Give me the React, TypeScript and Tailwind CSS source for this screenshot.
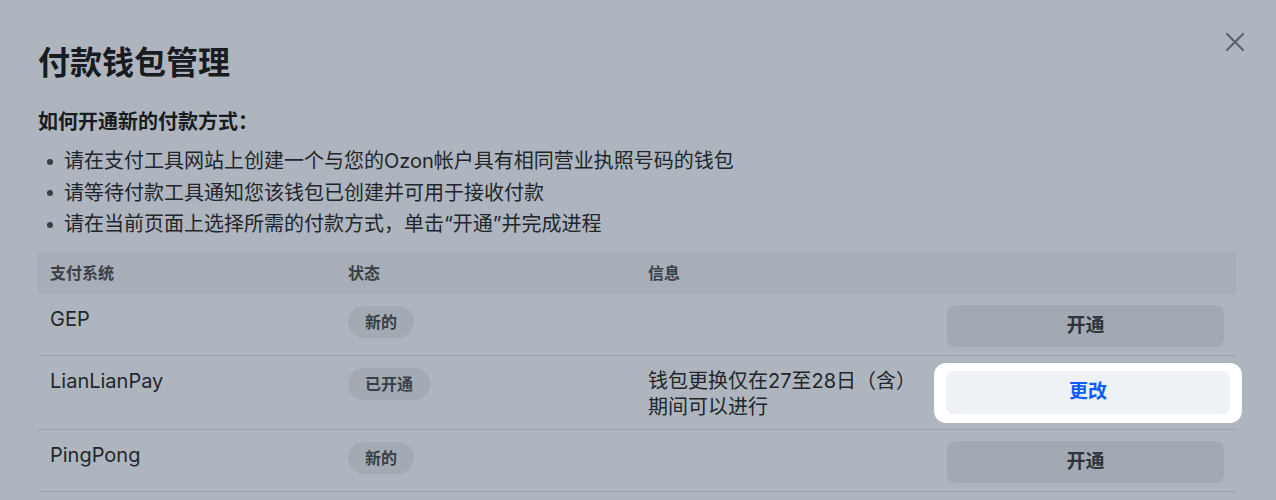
import { X } from "lucide-react";

type Wallet = {
  name: string;
  status: string;
  info?: string[];
  action: string;
  focused?: boolean;
};

const wallets: Wallet[] = [
  { name: "GEP", status: "新的", action: "开通" },
  {
    name: "LianLianPay",
    status: "已开通",
    info: ["钱包更换仅在27至28日（含）", "期间可以进行"],
    action: "更改",
    focused: true,
  },
  { name: "PingPong", status: "新的", action: "开通" },
];

const steps = [
  "请在支付工具网站上创建一个与您的Ozon帐户具有相同营业执照号码的钱包",
  "请等待付款工具通知您该钱包已创建并可用于接收付款",
  "请在当前页面上选择所需的付款方式，单击“开通”并完成进程",
];

const font = { fontFamily: "Inter, 'Noto Sans CJK SC', sans-serif" };

const App = function () {
  return (
    <div
      className="relative w-[1276px] h-[500px] overflow-hidden bg-[#aeb5be] text-[#22262c]"
      style={font}
    >
      <button className="absolute top-[26px] right-[25px] text-[#5c626a]">
        <X size={32} strokeWidth={1.6} />
      </button>
      <div className="pl-[38px] pr-[40px] pt-[43px]">
        <h1 className="text-[32px] leading-[40px] font-bold text-[#181b20]">
          付款钱包管理
        </h1>
        <h2 className="mt-[25px] text-[20px] leading-[28px] font-bold text-[#181b20]">
          如何开通新的付款方式：
        </h2>
        <ul className="mt-[10px]">
          {steps.map((s, i) => (
            <li key={i} className="flex items-center text-[20px] leading-[31.5px]">
              <span className="ml-[9px] mr-[11px] w-[6px] h-[6px] rounded-full bg-[#3a3f46]"></span>
              {s}
            </li>
          ))}
        </ul>
        <div className="mt-[11px]">
          <div className="grid grid-cols-[298px_300px_299px_1fr] h-[42px] items-center bg-[#a7aeb7] text-[16px] font-bold text-[#3b4048]">
            <div className="px-[12px]">支付系统</div>
            <div className="px-[12px]">状态</div>
            <div className="px-[12px]">信息</div>
            <div></div>
          </div>
          {wallets.map((w) => (
            <div
              key={w.name}
              className="grid grid-cols-[298px_300px_299px_1fr] min-h-[62px] border-b border-[#9da4ad] text-[20px] leading-[26px]"
            >
              <div className="px-[12px] pt-[12px]">{w.name}</div>
              <div className="px-[12px] pt-[12px]">
                <span className="inline-flex items-center h-[32px] px-[17px] rounded-full bg-[#a3aab3] text-[16px] font-bold text-[#3a3f46]">
                  {w.status}
                </span>
              </div>
              <div className="px-[12px] pt-[12px] pb-[9px]">
                {w.info?.map((l) => (
                  <div key={l}>{l}</div>
                ))}
              </div>
              <div className="flex items-center px-[12px]">
                {w.focused ? (
                  <div className="relative flex-1 -ml-[1px] -mr-[6px]">
                    <div className="absolute -left-[12px] -right-[12px] -top-[8px] -bottom-[9px] rounded-[12px] bg-white"></div>
                    <button className="relative w-full h-[43px] rounded-[8px] bg-[#eef1f6] text-[19px] font-bold text-[#0b5cff]">
                      {w.action}
                    </button>
                  </div>
                ) : (
                  <button className="flex-1 mt-[3px] h-[42px] rounded-[8px] bg-[#a2a9b2] text-[19px] font-bold text-[#2f343b]">
                    {w.action}
                  </button>
                )}
              </div>
            </div>
          ))}
        </div>
      </div>
    </div>
  );
};

export default App;
